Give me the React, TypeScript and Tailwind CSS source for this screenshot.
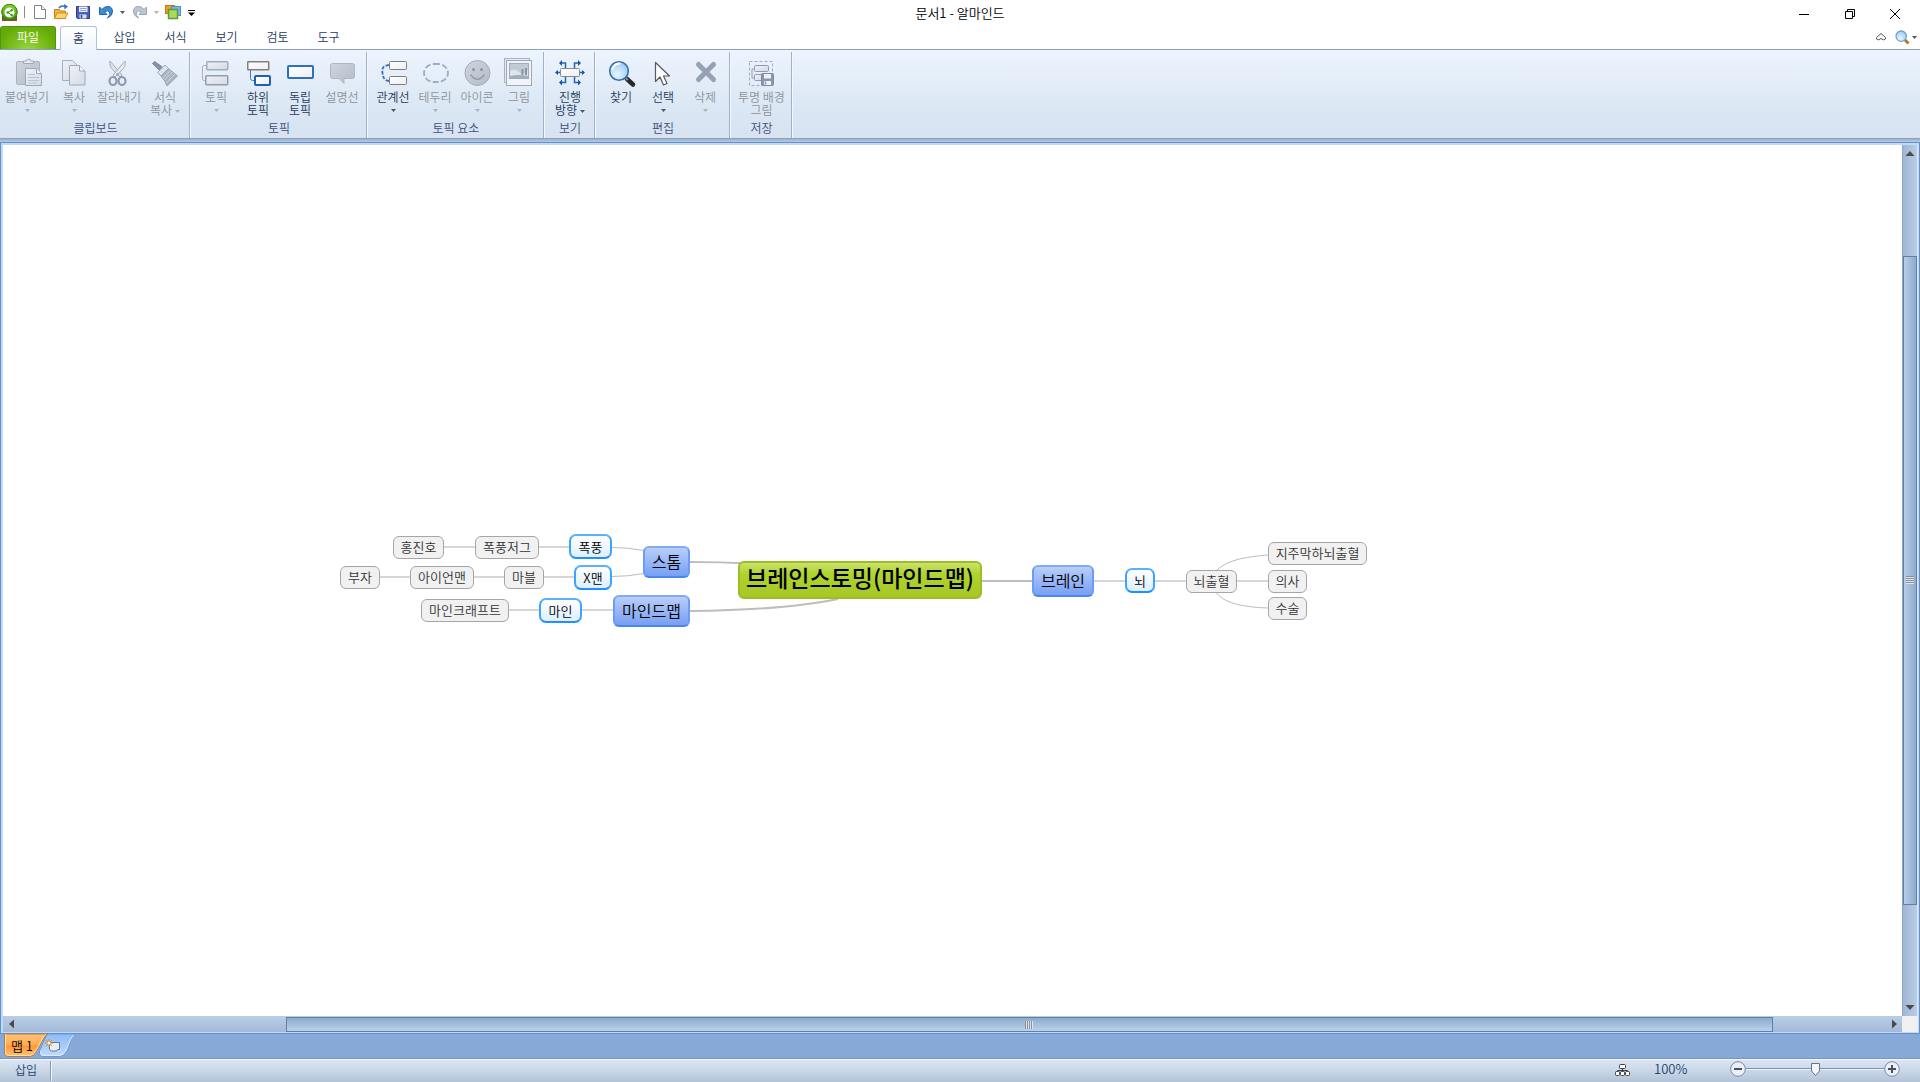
import React from "react";

type IconProps = { children: React.ReactNode; className?: string; box?: string };

function Svg({ children, className = "size-8", box = "0 0 32 32" }: IconProps) {
  return (
    <svg viewBox={box} className={className + " shrink-0"} fill="none" aria-hidden="true">
      {children}
    </svg>
  );
}

function Gradients() {
  return (
    <svg className="absolute size-0" aria-hidden="true">
      <defs>
        <linearGradient id="plate" x1="0" y1="0" x2="1" y2="1">
          <stop offset="0" stopColor="#ffffff" />
          <stop offset="1" stopColor="#eceef2" />
        </linearGradient>
        <linearGradient id="dull" x1="0" y1="0" x2="1" y2="1">
          <stop offset="0" stopColor="#cfd5de" />
          <stop offset="1" stopColor="#b4bcc9" />
        </linearGradient>
        <linearGradient id="pale" x1="0" y1="0" x2="1" y2="1">
          <stop offset="0" stopColor="#eef2f7" />
          <stop offset="1" stopColor="#d5dbe4" />
        </linearGradient>
        <radialGradient id="lens" cx="0.4" cy="0.7" r="0.8">
          <stop offset="0" stopColor="#e8f6ff" />
          <stop offset="1" stopColor="#8fc4f4" />
        </radialGradient>
        <linearGradient id="leaf" x1="0" y1="0" x2="0" y2="1">
          <stop offset="0" stopColor="#7ed321" />
          <stop offset="1" stopColor="#3f9a10" />
        </linearGradient>
        <linearGradient id="orangeTab" x1="0" y1="0" x2="0" y2="1">
          <stop offset="0" stopColor="#ffc478" />
          <stop offset="0.5" stopColor="#ffab4f" />
          <stop offset="0.52" stopColor="#ff9638" />
          <stop offset="1" stopColor="#ffc56e" />
        </linearGradient>
        <linearGradient id="blueTab" x1="0" y1="0" x2="0" y2="1">
          <stop offset="0" stopColor="#8fbcf8" />
          <stop offset="0.5" stopColor="#a5c9fa" />
          <stop offset="1" stopColor="#c4dcfb" />
        </linearGradient>
      </defs>
    </svg>
  );
}

const icons: Record<string, React.ReactNode> = {
  paste: (
    <>
      <rect x="5.5" y="4.5" width="23" height="23" rx="1.5" fill="url(#dull)" stroke="#aab3c1" />
      <path d="M12.5 6.5V4h3a2 2 0 0 1 4 0h3v2.500z" fill="#e6eaf0" stroke="#a0a9b8" />
      <path d="M14.500 11.500h11l5 5v12h-16z" fill="url(#pale)" stroke="#9fa8b7" />
      <path d="M25.500 11.500v5h5" fill="#f4f6f9" stroke="#9fa8b7" />
      <path d="M17 17.500h7M17 20.500h11M17 23.500h11M17 26h9" stroke="#bcc4d0" />
    </>
  ),
  copy: (
    <>
      <path d="M4.500 3.500h10l5 5v15h-15z" fill="url(#pale)" stroke="#a7b0be" />
      <path d="M11.500 8.500h10l5.500 5.500v14h-15.500z" fill="url(#pale)" stroke="#9fa8b7" />
      <path d="M21.500 8.500v5.500h5.500" fill="#f4f6f9" stroke="#9fa8b7" />
    </>
  ),
  cut: (
    <>
      <path d="M7 4c-1 4 1 7 4 10l6 6 2-2z" fill="#dfe4eb" stroke="#a0a9b8" />
      <path d="M22 4c1 4-1 7-4 10l-6 6-2-2z" fill="#e9edf2" stroke="#a0a9b8" />
      <ellipse cx="10" cy="24" rx="3.500" ry="4" stroke="#8d98aa" strokeWidth="2.200" />
      <ellipse cx="19" cy="24" rx="3.500" ry="4" stroke="#8d98aa" strokeWidth="2.200" />
      <circle cx="14.500" cy="17.500" r="1.200" fill="#8d98aa" />
    </>
  ),
  brush: (
    <>
      <path d="M3.500 6.500L5.500 4.500l8 5.500-3 3.500z" fill="#8592a8" stroke="#7d8aa0" />
      <path d="M8.500 15.500l7.500-7.500 3.500 3.500-7.500 7.500z" fill="#dde2e9" stroke="#9ea8b7" />
      <path d="M12 19l7.500-7.500 9 7.500-10.500 10q-1.500-5-6-10z" fill="#aab3c1" stroke="#98a2b2" />
      <path d="M14 21l7.500-7.500M15.500 23l8-8M17 26l9-9" stroke="#cfd5de" />
    </>
  ),
  topic: (
    <>
      <path d="M7 8.500H4q-1.500 0-1.500 1.500v12q0 1.500 1.500 1.500h3" stroke="#aab3c1" />
      <rect x="6.750" y="4.750" width="21" height="8" rx="1" fill="url(#pale)" stroke="#a3acba" strokeWidth="1.500" />
      <rect x="5.750" y="18.750" width="22" height="9" rx="1" fill="url(#pale)" stroke="#929dae" strokeWidth="1.500" />
    </>
  ),
  subtopic: (
    <>
      <path d="M8.500 13v8.500q0 2 2 2H13" stroke="#3f7cc4" />
      <rect x="5.750" y="4.750" width="21" height="8" rx="0.500" fill="url(#plate)" stroke="#85807d" strokeWidth="1.500" />
      <rect x="13" y="19" width="15" height="9" rx="1" fill="url(#plate)" stroke="#1f5fb8" strokeWidth="2" />
    </>
  ),
  freetopic: <rect x="4" y="9" width="25" height="12" rx="1" fill="url(#plate)" stroke="#2f6fc0" strokeWidth="2" />,
  callout: (
    <path d="M6.500 6.500h20a2 2 0 0 1 2 2v11a2 2 0 0 1-2 2H18v5l-5-5H6.500a2 2 0 0 1-2-2v-11a2 2 0 0 1 2-2z" fill="url(#dull)" stroke="#aeb6c3" />
  ),
  relation: (
    <>
      <path d="M12 8C5 9 5 12 5.500 16s1 7 6.500 8" stroke="#3570ba" strokeWidth="1.800" strokeDasharray="3.500 1.500" />
      <rect x="12.500" y="4.500" width="17" height="8" rx="1" fill="url(#plate)" stroke="#7d7d80" />
      <rect x="12.500" y="19.500" width="17" height="8" rx="1" fill="url(#plate)" stroke="#7d7d80" />
    </>
  ),
  border: (
    <rect x="5" y="7" width="24" height="18" rx="10" ry="9" stroke="#9facc3" strokeWidth="1.800" strokeDasharray="6 2.250" />
  ),
  smile: (
    <>
      <circle cx="16.500" cy="16" r="12.500" fill="url(#dull)" stroke="#a3acba" />
      <circle cx="12.500" cy="12.500" r="1.500" fill="#8b95a5" />
      <circle cx="20.500" cy="12.500" r="1.500" fill="#8b95a5" />
      <path d="M9.500 17.500q7 9.500 14 0" stroke="#929cac" strokeWidth="1.600" />
    </>
  ),
  picture: (
    <>
      <rect x="1.500" y="1.500" width="25" height="24" fill="#e4e9f0" stroke="#aab3c1" />
      <rect x="3.500" y="3.500" width="25" height="25" fill="#f0f3f7" stroke="#9fa8b7" />
      <rect x="6.500" y="6.500" width="19" height="15" fill="#c2cad5" stroke="#a2abba" />
      <path d="M7 14q5-3 9 1t9-2v8H7z" fill="#dfe5ec" />
      <path d="M7 19q8-2 18 0v2H7z" fill="#a3adbb" />
      <path d="M19.500 12v6M23 11v7" stroke="#8793a6" strokeWidth="2" />
    </>
  ),
  direction: (
    <>
      <g stroke="#2466b3" strokeWidth="1.500">
        <path d="M11.500 11V6H7M20.500 11V6h5M11.500 20v5.500H7M20.500 20v5.500h5M6 15.500H2M26 15.500h4" />
      </g>
      <g fill="#1656a8">
        <path d="M8 3v6L5 6zM24 3v6l3-3zM8 22.500v6l-3-3zM24 22.500v6l3-3zM4 13v5l-3-2.500zM28 13v5l3-2.500z" />
      </g>
      <rect x="6.500" y="11.500" width="19" height="8" rx="1" fill="url(#plate)" stroke="#8b8785" />
    </>
  ),
  find: (
    <>
      <path d="M22 22l6 5.500" stroke="#26282c" strokeWidth="4.500" strokeLinecap="round" />
      <path d="M20.500 21l2.500 2" stroke="#8d8f94" strokeWidth="2" />
      <circle cx="14" cy="14" r="9.300" fill="url(#lens)" stroke="#3c6ea6" strokeWidth="1.600" />
      <path d="M7.500 12q1.500-5 7-5.500" stroke="#ffffff" strokeWidth="2" strokeLinecap="round" />
    </>
  ),
  cursor: (
    <path d="M8.500 5.500v19l4.500-4.500 3.500 8 3.500-1.500-3.500-7.500h6z" fill="#ffffff" stroke="#57595e" strokeWidth="1.200" strokeLinejoin="round" />
  ),
  remove: (
    <path d="M9.500 7.500l15 15M24.500 7.500l-15 15" stroke="#96a1b3" strokeWidth="5" strokeLinecap="round" />
  ),
  savebg: (
    <>
      <rect x="3.500" y="4.500" width="23" height="24" stroke="#a0abbc" strokeDasharray="3 2" />
      <path d="M8 12H6v9h3" stroke="#8f9bb0" />
      <rect x="8.500" y="8.500" width="14" height="6" rx="1" fill="url(#pale)" stroke="#8f9bb0" />
      <rect x="8.500" y="17.500" width="10" height="6" rx="1" fill="url(#pale)" stroke="#8f9bb0" />
      <rect x="15.500" y="16.500" width="12" height="12" rx="1" fill="#8996ae" stroke="#7e8ba3" />
      <path d="M18 17h7v4.500h-7zM18 24h7v4h-7z" fill="#eef1f6" />
      <path d="M19.500 24.500v3" stroke="#8996ae" strokeWidth="1.500" />
    </>
  ),
};

function Caret({ className = "text-[#4f5660]" }: { className?: string }) {
  return (
    <svg viewBox="0 0 5 3" className={"inline-block h-[3px] w-[5px] shrink-0 " + className} aria-hidden="true">
      <path d="M0 0h5L2.500 3z" fill="currentColor" />
    </svg>
  );
}

type Tool = { icon: string; label: string; caret?: "below" | "inline"; off?: boolean; w?: string };
type Group = { title: string; tools: Tool[] };

const groups: Group[] = [
  {
    title: "클립보드",
    tools: [
      { icon: "paste", label: "붙여넣기", caret: "below", off: true, w: "w-[54px]" },
      { icon: "copy", label: "복사", caret: "below", off: true, w: "w-10" },
      { icon: "cut", label: "잘라내기", off: true, w: "w-[50px]" },
      { icon: "brush", label: "서식\n복사", caret: "inline", off: true },
    ],
  },
  {
    title: "토픽",
    tools: [
      { icon: "topic", label: "토픽", caret: "below", off: true },
      { icon: "subtopic", label: "하위\n토픽" },
      { icon: "freetopic", label: "독립\n토픽" },
      { icon: "callout", label: "설명선", off: true },
    ],
  },
  {
    title: "토픽 요소",
    tools: [
      { icon: "relation", label: "관계선", caret: "below" },
      { icon: "border", label: "테두리", caret: "below", off: true },
      { icon: "smile", label: "아이콘", caret: "below", off: true },
      { icon: "picture", label: "그림", caret: "below", off: true },
    ],
  },
  { title: "보기", tools: [{ icon: "direction", label: "진행\n방향", caret: "inline" }] },
  {
    title: "편집",
    tools: [
      { icon: "find", label: "찾기" },
      { icon: "cursor", label: "선택", caret: "below" },
      { icon: "remove", label: "삭제", caret: "below", off: true },
    ],
  },
  { title: "저장", tools: [{ icon: "savebg", label: "투명 배경\n그림", off: true, w: "w-[53px]" }] },
];

function ToolButton({ tool }: { tool: Tool }) {
  const caretColor = tool.off ? "text-[#adb3bc]" : "text-[#4f5660]";
  return (
    <button
      type="button"
      disabled={tool.off}
      className={
        "flex flex-col items-center text-xs leading-[13px] " +
        (tool.w ?? "w-[42px]") +
        (tool.off ? " text-[#8d939c]" : " text-[#1e395b]")
      }
    >
      <Svg>{icons[tool.icon]}</Svg>
      <span className="mt-px text-center whitespace-pre">
        {tool.label}
        {tool.caret === "inline" && <Caret className={"ml-[3px] align-middle " + caretColor} />}
      </span>
      {tool.caret === "below" && (
        <span className="flex h-[15px] items-center">
          <Caret className={caretColor} />
        </span>
      )}
    </button>
  );
}

function QuickAccess() {
  return (
    <div className="flex h-6 items-center">
      <button type="button" aria-label="알마인드" className="flex w-[18px] justify-center">
        <Svg box="0 0 17 17" className="size-[17px]">
          <path d="M1 12h15v5H1z" fill="#7a5a1c" />
          <circle cx="8.500" cy="8" r="7.800" fill="url(#leaf)" stroke="#2f7d0c" />
          <circle cx="8.500" cy="8.500" r="5" fill="#ffffff" />
          <path d="M10.500 6.500L7 8.500l3.500 2.500" stroke="#3f9a10" />
          <circle cx="10.700" cy="6.300" r="1.200" fill="#3f9a10" />
          <circle cx="6.700" cy="8.500" r="1.300" fill="#3f9a10" />
          <circle cx="10.700" cy="11" r="1.200" fill="#3f9a10" />
        </Svg>
      </button>
      <div className="flex w-3 justify-center">
        <div className="h-3 w-px bg-[#8a8a8a]" />
      </div>
      <button type="button" aria-label="새로 만들기" className="flex w-5 justify-center">
        <Svg box="0 0 16 16" className="size-4">
          <path d="M2.500 1.500h7l4 4v9h-11z" fill="#ffffff" stroke="#7f8389" />
          <path d="M9.500 1.500v4h4" fill="#eef1f5" stroke="#7f8389" />
        </Svg>
      </button>
      <button type="button" aria-label="열기" className="flex w-[22px] justify-center">
        <Svg box="0 0 16 16" className="size-4">
          <path d="M1.500 14.500v-9h5l1 1.500h5v7.500z" fill="#f2b13c" stroke="#c8841b" />
          <path d="M1.500 14.500l2.500-5.500h11l-3 5.500z" fill="#ffd36e" stroke="#d18f22" />
          <path d="M6 4q2-3 6-1.500" stroke="#2a77c9" strokeWidth="1.600" />
          <path d="M11 0l4 2.500-3.500 3z" fill="#2a77c9" />
        </Svg>
      </button>
      <button type="button" aria-label="저장" className="flex w-[22px] justify-center">
        <Svg box="0 0 16 16" className="size-4">
          <path d="M1.500 2.500h13v12h-12l-1-1z" fill="#4a5fc0" stroke="#2d3a8f" />
          <path d="M4 2.500h8.500v5.500H4z" fill="#eef2ff" />
          <path d="M5 4.500h6.500M5 6.500h6.500" stroke="#8fa0dc" />
          <path d="M4.500 10.500h7v4h-7z" fill="#d8dff7" />
          <path d="M6.500 11v3" stroke="#2d3a8f" strokeWidth="1.500" />
        </Svg>
      </button>
      <button type="button" aria-label="실행 취소" className="flex w-[23px] justify-center">
        <Svg box="0 0 16 16" className="size-4">
          <path d="M1.500 3v7.500H9L6.500 8Q10 5.500 11.500 8t-2 6q5.500-2.500 5-7T10 2.500 4 5.500z" fill="#3c8ad8" stroke="#1f66b4" />
        </Svg>
      </button>
      <button type="button" aria-label="실행 취소 목록" className="flex w-[10px] justify-center"><Caret /></button>
      <button type="button" aria-label="다시 실행" disabled className="flex w-[26px] justify-center">
        <Svg box="0 0 16 16" className="size-4">
          <path d="M14.500 3v7.500H7L9.500 8Q6 5.500 4.500 8t2 6Q1 11.500 1.500 7T6 2.500t6 3z" fill="#bcc5d2" stroke="#9aa5b6" />
        </Svg>
      </button>
      <button type="button" aria-label="다시 실행 목록" disabled className="flex w-[6px] justify-center">
        <Caret className="text-[#b0b0b0]" />
      </button>
      <button type="button" aria-label="맵 창" className="flex w-[27px] justify-center">
        <Svg box="0 0 16 16" className="size-4">
          <rect x="0.500" y="1.500" width="9" height="8" fill="#f29a2e" stroke="#c8741a" />
          <rect x="6.500" y="2.500" width="9" height="9" fill="#7db7e8" stroke="#4f8fca" />
          <rect x="3.500" y="5.500" width="9" height="9" fill="#a9d865" stroke="#5aa02a" strokeWidth="1.500" />
        </Svg>
      </button>
      <button type="button" aria-label="빠른 실행 사용자 지정" className="flex w-[10px] justify-center pt-[2px]">
        <Svg box="0 0 7 6" className="h-[6px] w-[7px]">
          <path d="M0 0.500h7" stroke="#000" />
          <path d="M0 2.500h7L3.500 6z" fill="#000" />
        </Svg>
      </button>
    </div>
  );
}

function TitleBar() {
  return (
    <header className="grid h-[26px] grid-cols-[1fr_auto_1fr] items-start bg-white">
      <QuickAccess />
      <h1 className="pt-1 text-[13px] leading-[18px] text-black">문서1 - 알마인드</h1>
      <div className="flex h-[26px] justify-end pt-[2px] pr-[2px]">
        <button type="button" aria-label="최소화" className="flex w-[46px] items-center justify-center">
          <Svg box="0 0 10 10" className="size-[10px]"><path d="M0 5.500h10" stroke="#000" /></Svg>
        </button>
        <button type="button" aria-label="이전 크기로" className="flex w-[45px] items-center justify-center">
          <Svg box="0 0 10 10" className="size-[10px]"><path d="M0.500 2.500h7v7h-7zM2.500 2.500v-2h7v7h-2" stroke="#000" /></Svg>
        </button>
        <button type="button" aria-label="닫기" className="flex w-[46px] items-center justify-center">
          <Svg box="0 0 10 10" className="size-[10px]"><path d="M0 0l10 10M10 0L0 10" stroke="#000" /></Svg>
        </button>
      </div>
    </header>
  );
}

function TabRow() {
  return (
    <nav className="flex h-6 border-b border-[#8b9fbe] bg-white text-xs leading-4 text-[#1e395b]">
      <button type="button" className="w-14 rounded-t-[3px] border border-b-0 border-[#4f9310] bg-radial-[at_50%_110%] from-[#9bd83a] to-[#62ab06] to-80% pb-[2px] text-white">
        파일
      </button>
      <button type="button" className="-mb-px ml-1 w-[37px] rounded-t-[3px] border border-b-0 border-[#b0c1da] bg-linear-to-b from-white to-[#eef5fd] pb-px">
        홈
      </button>
      <div className="ml-[2px] flex pb-px">
        {["삽입", "서식", "보기", "검토", "도구"].map((t) => (
          <button key={t} type="button" className="w-[51px]">{t}</button>
        ))}
      </div>
      <div className="ml-auto flex items-center pr-[3px] pb-px">
        <button type="button" aria-label="리본 최소화" className="flex w-5 justify-center">
          <Svg box="0 0 10 8" className="h-2 w-[10px]">
            <path d="M0.500 4.500l4.500-4 4.500 4v1.500q-2 2-4.500-0.500-2.500 2.500-4.500 0.500z" fill="#ffffff" stroke="#4e5359" />
          </Svg>
        </button>
        <button type="button" aria-label="도움말 검색" className="flex items-center gap-[2px] pl-1">
          <Svg box="0 0 15 15" className="size-[15px]">
            <path d="M9.500 9.500l4 4" stroke="#b27a2c" strokeWidth="3" />
            <circle cx="6.200" cy="6.200" r="5.200" fill="url(#lens)" stroke="#6fa3cf" strokeWidth="1.300" />
          </Svg>
          <Caret />
        </button>
      </div>
    </nav>
  );
}

function Ribbon() {
  return (
    <section aria-label="리본" className="flex h-[89px] border-b border-[#8b9fbe] bg-linear-to-b from-[#edf4fd] via-[#dae6f3] via-70% to-[#d8e3f2] pt-[2px]">
      {groups.map((g, i) => (
        <div key={g.title} className="flex flex-col justify-between border-r border-[#9fb1cc] pt-[5px] shadow-[1px_0_0_#f4f8fd]">
          <div className={"flex items-start pr-[3px] " + (i === 0 ? "" : "pl-[5px]")}>
            {g.tools.map((t) => <ToolButton key={t.icon} tool={t} />)}
          </div>
          <h2 className="pb-[2px] pl-[2px] text-center text-xs leading-4 text-[#3b4f77]">{g.title}</h2>
        </div>
      ))}
    </section>
  );
}

type Level = "root" | "main" | "sub" | "leaf";
type MapNode = { t: string; x: number; y: number; w: number; level: Level };

const nodes: MapNode[] = [
  { t: "브레인스토밍(마인드맵)", x: 735, y: 416, w: 244, level: "root" },
  { t: "브레인", x: 1029, y: 420, w: 62, level: "main" },
  { t: "스톰", x: 640, y: 401, w: 47, level: "main" },
  { t: "마인드맵", x: 610, y: 450, w: 77, level: "main" },
  { t: "폭풍", x: 566, y: 389, w: 43, level: "sub" },
  { t: "X맨", x: 571, y: 420, w: 38, level: "sub" },
  { t: "마인", x: 536, y: 453, w: 43, level: "sub" },
  { t: "뇌", x: 1122, y: 423, w: 30, level: "sub" },
  { t: "폭풍저그", x: 472, y: 391, w: 64, level: "leaf" },
  { t: "홍진호", x: 390, y: 391, w: 51, level: "leaf" },
  { t: "마블", x: 501, y: 421, w: 40, level: "leaf" },
  { t: "아이언맨", x: 407, y: 421, w: 64, level: "leaf" },
  { t: "부자", x: 337, y: 421, w: 40, level: "leaf" },
  { t: "마인크래프트", x: 418, y: 454, w: 88, level: "leaf" },
  { t: "뇌출혈", x: 1183, y: 425, w: 51, level: "leaf" },
  { t: "지주막하뇌출혈", x: 1265, y: 397, w: 99, level: "leaf" },
  { t: "의사", x: 1265, y: 425, w: 39, level: "leaf" },
  { t: "수술", x: 1265, y: 452, w: 39, level: "leaf" },
];

const nodeStyle: Record<Level, string> = {
  root: "h-[38px] rounded-md border-2 border-[#9dbd25] bg-linear-to-b from-[#cbe36a] via-[#b1d32f] via-30% to-[#a6c726] pb-[5px] text-[23px] font-medium text-black",
  main: "h-8 rounded-md border-2 border-t-[#82abf6] border-x-[#6c9cf5] border-b-[#4a86ee] bg-linear-to-b from-[#b9cef9] to-[#779ff2] pb-[3px] text-base text-black",
  sub: "h-[25px] rounded-[7px] border-2 border-t-[#58b0ff] border-x-[#3ea3ff] border-b-[#1e90ff] bg-linear-to-b from-white to-[#dcefff] pb-px text-[13px] text-black",
  leaf: "h-[23px] rounded-md border border-[#a6a6a6] bg-[#f1f1f1] pb-[3px] text-[13px] text-[#333333]",
};

function MindMap() {
  return (
    <main className="relative min-w-0 flex-1 overflow-hidden bg-white">
      <svg className="absolute inset-0 size-full" fill="none" aria-hidden="true">
        <g stroke="#bdbdbd" strokeWidth="2">
          <path d="M979 436h50" />
          <path d="M687 417q30 0 60 1.500" />
          <path d="M687 466q95-1 148-12" />
        </g>
        <g stroke="#d6d6d6" strokeWidth="2">
          <path d="M1091 436h31M1152 436h31M1234 436h31" />
          <path d="M441 402h31M536 402h30M377 432h30M471 432h30M541 432h30M506 465h30M579 465h31" />
        </g>
        <g stroke="#bcbcbc">
          <path d="M609 402.500q16 0 32 3M609 431.500q16-0 32-3" />
          <path d="M1213 426c10-10 26-14 52-16M1212 446c8 12 26 16 53 17" />
        </g>
      </svg>
      {nodes.map((n) => (
        <div
          key={n.t}
          className={"absolute flex items-center justify-center leading-none whitespace-nowrap " + nodeStyle[n.level]}
          style={{ left: n.x, top: n.y, width: n.w }}
        >
          {n.t}
        </div>
      ))}
    </main>
  );
}

function Arrow({ d }: { d: string }) {
  return (
    <svg viewBox="0 0 10 10" className="size-[10px]" aria-hidden="true"><path d={d} fill="#4b4b4b" /></svg>
  );
}

function VerticalScroll() {
  return (
    <div className="flex w-4 flex-col border-r border-l border-l-[#8ea6cb] border-r-[#dfeaf7] bg-linear-to-r from-[#9fb6d4] to-[#b9cde6]">
      <button type="button" aria-label="위로" className="flex h-4 items-center justify-center"><Arrow d="M0.500 8L5 3l4.500 5z" /></button>
      <div className="flex-[95]" />
      <div className="flex flex-[650] items-center justify-center border border-[#5f7fa8] bg-linear-to-r from-[#b9cde8] to-[#8eabd0]">
        <div className="h-2 w-2 bg-[repeating-linear-gradient(to_bottom,#8a8f95_0_1px,#dfe6ee_1px_2px)]" />
      </div>
      <div className="flex-[95]" />
      <button type="button" aria-label="아래로" className="flex h-4 items-center justify-center"><Arrow d="M0.500 2L5 7l4.500-5z" /></button>
    </div>
  );
}

function HorizontalScroll() {
  return (
    <div className="flex h-4">
      <div className="flex flex-1 bg-linear-to-b from-[#b9cde6] via-[#aec4de] to-[#a3b9d8]">
        <button type="button" aria-label="왼쪽으로" className="flex w-4 items-center justify-center"><Arrow d="M8 0.500L3 5l5 4.500z" /></button>
        <div className="flex-[267]" />
        <div className="mt-px flex flex-[1487] items-center justify-center border border-[#5f7fa8] bg-linear-to-b from-[#8eabcb] to-[#bad2ec]">
          <div className="h-2 w-2 bg-[repeating-linear-gradient(to_right,#8a8f95_0_1px,#dfe6ee_1px_2px)]" />
        </div>
        <div className="flex-[113]" />
        <button type="button" aria-label="오른쪽으로" className="flex w-4 items-center justify-center"><Arrow d="M3 0.500L8 5 3 9.500z" /></button>
      </div>
      <div className="w-4 bg-[#f0f0f0]" />
    </div>
  );
}

function SheetTabs() {
  return (
    <div className="flex h-6 bg-[#87a9d8] pl-1">
      <button type="button" className="relative z-10 h-[23px] w-11 text-[13px] text-black">
        <svg viewBox="0 0 44 23" className="absolute inset-0 size-full overflow-visible" aria-hidden="true">
          <path d="M0.500 0v19q0 3.500 3.500 3.500h22q4 0 7-6l6-11q2.500-5.500 5-5.500z" fill="url(#orangeTab)" stroke="#a8804d" />
          <path d="M1.500 0v18.500q0 3 3 3h21q4 0 6.500-5l6-11q2-4 4-5.500" fill="none" stroke="#ffe0a4" />
        </svg>
        <span className="relative block pr-2 leading-5">맵 1</span>
      </button>
      <button type="button" aria-label="새 맵" className="relative -ml-[9px] flex h-[23px] w-[35px] items-center pl-1.5">
        <svg viewBox="0 0 35 23" className="absolute inset-0 size-full overflow-visible" aria-hidden="true">
          <path d="M0.500 17v2q0 3.500 3.500 3.500h17q4 0 7-6l4-10q2.500-6.500 5-6.500H8z" fill="url(#blueTab)" stroke="#6d97d4" />
          <path d="M1.500 17v1.500q0 3 3 3h16q4 0 6.500-5l4-10q2-4 4-5.500" fill="none" stroke="#dceafe" />
        </svg>
        <Svg box="0 0 16 14" className="relative h-[14px] w-4">
          <path d="M4.500 3.500h10v7h-2l-1 1.500h-5l-2-1.500z" fill="#e9eef6" stroke="#66758f" />
          <path d="M4 0v8M0 4h8M1 1l6 6M7 1L1 7" stroke="#d98a1c" />
          <circle cx="4" cy="4" r="1.500" fill="#fff6d8" />
        </Svg>
      </button>
    </div>
  );
}

function StatusBar() {
  return (
    <footer className="flex h-6 items-center border-t border-[#7795c2] bg-linear-to-b from-[#dce7f5] via-[#c9d7e7] to-[#b3c4d9] text-xs leading-4 text-[#24406e] shadow-[inset_0_1px_0_#f4f8fd]">
      <span className="w-[50px] pb-[2px] pl-[15px]">삽입</span>
      <div className="h-5 w-[2px] border-r border-[#f0f5fb] bg-[#8b9ab0]" />
      <div className="ml-auto flex items-center pr-5 pb-[3px]">
        <button type="button" aria-label="맵 전체 보기" className="mt-[2px] mr-6">
          <Svg box="0 0 15 12" className="h-3 w-[15px]">
            <path d="M7.500 5v2M2.500 8V6.500h10V8" stroke="#3d4046" />
            <rect x="4.500" y="0.500" width="6" height="4" rx="1" fill="#fff" stroke="#3d4046" />
            <rect x="0.500" y="7.500" width="4" height="4" rx="1" fill="#fff" stroke="#3d4046" />
            <rect x="5.500" y="7.500" width="4" height="4" rx="1" fill="#fff" stroke="#3d4046" />
            <rect x="10.500" y="7.500" width="4" height="4" rx="1" fill="#fff" stroke="#3d4046" />
          </Svg>
        </button>
        <output className="w-[76px] text-[13px]">100%</output>
        <button type="button" aria-label="축소">
          <Svg box="0 0 16 16" className="size-4">
            <circle cx="8" cy="8" r="7.300" fill="#e9f0f9" stroke="#7d8ba3" />
            <path d="M4 8h8" stroke="#4a4f5a" strokeWidth="2" />
          </Svg>
        </button>
        <div className="relative flex h-4 w-[138px] items-center justify-center">
          <div className="absolute inset-x-0 h-[2px] border-b border-[#eef4fb] bg-[#7d90b2]" />
          <Svg box="0 0 9 13" className="relative h-[13px] w-[9px]">
            <path d="M0.500 0.500h8v7.500l-4 4.500-4-4.500z" fill="#f3f7fc" stroke="#66748c" />
          </Svg>
          <input type="range" aria-label="확대/축소" min={0} max={200} defaultValue={100} className="absolute inset-0 w-full opacity-0" />
        </div>
        <button type="button" aria-label="확대">
          <Svg box="0 0 16 16" className="size-4">
            <circle cx="8" cy="8" r="7.300" fill="#e9f0f9" stroke="#7d8ba3" />
            <path d="M4 8h8M8 4v8" stroke="#4a4f5a" strokeWidth="2" />
          </Svg>
        </button>
      </div>
    </footer>
  );
}

export default function App() {
  return (
    <div className="flex h-screen flex-col overflow-hidden font-['Noto_Sans_CJK_KR',sans-serif] font-[350]">
      <Gradients />
      <TitleBar />
      <TabRow />
      <Ribbon />
      <div className="h-[3px] bg-linear-to-b from-[#9db1cf] to-[#b9cade]" />
      <div className="flex min-h-0 flex-1 flex-col border border-[#5f92d4] bg-white">
        <div className="flex min-h-0 flex-1 flex-col border-t-2 border-r border-b border-l-2 border-[#c3d9f3]">
          <div className="flex min-h-0 flex-1">
            <MindMap />
            <VerticalScroll />
          </div>
          <HorizontalScroll />
        </div>
      </div>
      <SheetTabs />
      <StatusBar />
    </div>
  );
}
